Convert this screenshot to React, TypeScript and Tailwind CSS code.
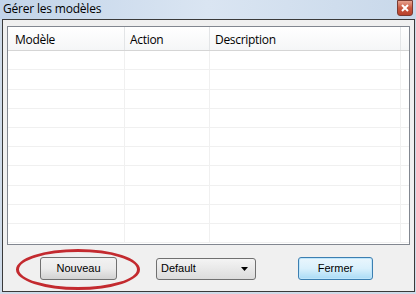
import React from "react";

const rowHeights = ["h-[19px]", "h-[20px]", "h-[19px]", "h-[19px]", "h-[19px]", "h-[19px]", "h-[20px]", "h-[19px]", "h-[19px]", "h-[19px]"];

function ListRow({ height }: { height: string }) {
  return (
    <div className={`flex ${height} border-b border-[#f0f0f0]`}>
      <div className="w-[117px] border-r border-[#f0f0f0]" />
      <div className="w-[85px] border-r border-[#f0f0f0]" />
      <div className="w-[191px] border-r border-[#f0f0f0]" />
      <div className="flex-1" />
    </div>
  );
}

export default function App() {
  return (
    <div className="relative w-[416px] h-[294px] flex flex-col bg-[#cfdbe9] overflow-hidden font-['Liberation_Sans',Arial,sans-serif]">
      {/* title bar */}
      <div className="h-[19px] flex items-start justify-between bg-gradient-to-r from-[#c2d4e9] via-[#dae5f2] to-[#c8d8ea]">
        <span className="pl-[3px] pt-[2px] text-[12px] leading-[14px] text-black font-['Open_Sans',sans-serif] tracking-[-0.2px]">
          Gérer les modèles
        </span>
        <div className="mr-[3px] w-[16px] h-[16px] rounded-b-[3px] border border-[#7a3b32] bg-gradient-to-b from-[#e6a28f] via-[#c9573f] to-[#b8412c] flex items-center justify-center">
          <svg width="8" height="8" viewBox="0 0 8 8">
            <path d="M1 1 L7 7 M7 1 L1 7" stroke="white" strokeWidth="2" />
          </svg>
        </div>
      </div>

      {/* dialog body */}
      <div className="ml-[2px] mr-[1px] h-[273px] border border-[#3a3a3a] bg-[#f0f0f0] flex flex-col">
        <div className="mt-[6px] mx-[4px] h-[219px] border border-[#828790] bg-white flex flex-col">
          <div className="flex h-[24px] border-b border-[#d5d5d5] bg-gradient-to-b from-white to-[#f5f6f7] text-[12px] text-black font-['Open_Sans',sans-serif] tracking-[-0.3px]">
            <div className="w-[117px] border-r border-[#e3e5e7] pl-[7px] pt-[4px]">Modèle</div>
            <div className="w-[85px] border-r border-[#e3e5e7] pl-[5px] pt-[4px]">Action</div>
            <div className="w-[191px] border-r border-[#e3e5e7] pl-[5px] pt-[4px]">Description</div>
            <div className="flex-1" />
          </div>
          {rowHeights.map((h, i) => (
            <ListRow key={i} height={h} />
          ))}
        </div>

        <div className="mt-[12px] flex items-center text-[11px] text-black">
          <button className="ml-[37px] w-[77px] h-[23px] rounded-[3px] border border-[#707070] bg-gradient-to-b from-[#f2f2f2] via-[#ebebeb] to-[#d2d2d2] flex items-center justify-center">
            Nouveau
          </button>
          <div className="ml-[39px] w-[100px] h-[22px] rounded-[3px] border border-[#707070] bg-gradient-to-b from-[#f4f4f4] to-[#dcdcdc] flex items-center justify-between pl-[4px] pr-[7px]">
            <span>Default</span>
            <svg width="7" height="4" viewBox="0 0 7 4">
              <path d="M0 0 H7 L3.5 4 Z" fill="black" />
            </svg>
          </div>
          <button className="ml-[42px] w-[75px] h-[23px] rounded-[3px] border border-[#3c7fb1] bg-gradient-to-b from-[#eaf6fd] via-[#d9f0fc] to-[#a9dbf6] shadow-[inset_0_0_0_1px_#bfe6fb] flex items-center justify-center">
            Fermer
          </button>
        </div>
      </div>

      {/* red annotation ellipse */}
      <div className="absolute left-[16px] top-[249px] w-[124px] h-[41px] rounded-[50%] border-[3px] border-[#c32a2f]" />
    </div>
  );
}
